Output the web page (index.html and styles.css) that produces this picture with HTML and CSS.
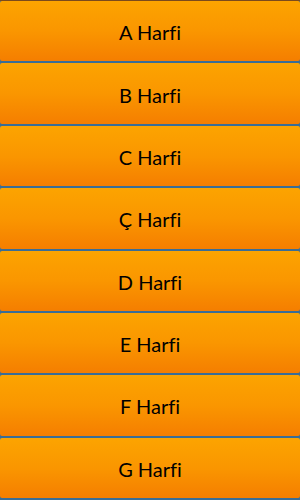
FILE: index.html
```html
<!DOCTYPE html>
<html lang="tr">
<head>
    <meta charset="UTF-8">
    <meta name="viewport" content="width=device-width, initial-scale=1.0">
    <title>Harfler</title>
    <link rel="stylesheet" href="styles.css">
</head>
<body>
    <div class="harf-list">
        <button class="harf-btn">A Harfi</button>
        <button class="harf-btn">B Harfi</button>
        <button class="harf-btn">C Harfi</button>
        <button class="harf-btn">Ç Harfi</button>
        <button class="harf-btn">D Harfi</button>
        <button class="harf-btn">E Harfi</button>
        <button class="harf-btn">F Harfi</button>
        <button class="harf-btn">G Harfi</button>
    </div>
</body>
</html>
```

FILE: styles.css
```css
html, body {
    margin: 0;
    padding: 0;
    background-color: #3a6d96;
}
.harf-list {
    display: flex;
    flex-direction: column;
    gap: 2px;
    height: 500px;
    padding-bottom: 2px;
    box-sizing: border-box;
    border-top: 1px solid #7a4a1c;
}
.harf-btn {
    flex: 1;
    margin: 0;
    border: none;
    border-radius: 2px;
    background: linear-gradient(to bottom, #fca400 0%, #fa9600 50%, #f57e00 100%);
    color: #000;
    font-family: Lato, "Noto Sans", Arial, sans-serif;
    font-size: 20px;
    padding: 2px 0 0;
    cursor: pointer;
}
.harf-btn:hover {
    background: #f08000;
}
```
